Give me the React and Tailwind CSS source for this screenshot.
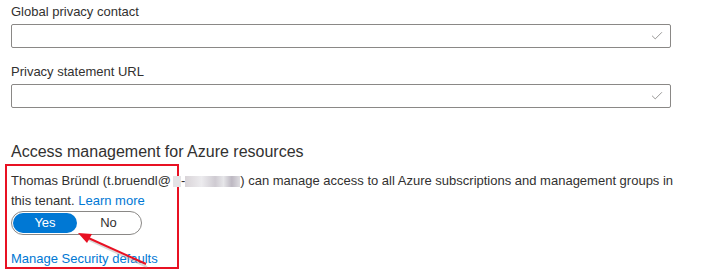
import { Check } from 'lucide-react'

const font = { fontFamily: '"Segoe UI", "Liberation Sans", Arial, sans-serif' }

function Field({ label }) {
  return (
    <div>
      <label className="block pt-[2px] text-[13px] leading-[20px] text-[#323130] mb-[2px]">{label}</label>
      <div className="h-[24px] w-[660px] border border-[#8a8886] rounded-[2px] flex items-center justify-end pr-[6px]">
        <Check size={14} strokeWidth={1.1} className="text-[#605e5c]" />
      </div>
    </div>
  )
}

export default function App() {
  return (
    <div className="relative w-[708px] h-[271px] bg-white overflow-hidden pl-[11px]" style={font}>
      <div className="flex flex-col gap-[12px]">
        <Field label="Global privacy contact" />
        <Field label="Privacy statement URL" />
      </div>

      <h2 className="mt-[33px] text-[16px] leading-[22px] text-[#323130]">Access management for Azure resources</h2>

      <div className="-ml-[6px] mt-[1px] w-[174px] h-[105px] border-2 border-[#e81123] pl-[4px] pt-[5px]">
        <p className="w-[680px] text-[13px] leading-[20px] text-[#323130]">
          <span className="whitespace-nowrap">
            Thomas Bründl (t.bruendl@
            <span className="inline-block align-middle ml-[2px] w-[8px] h-[11px] bg-[#e3e3e6]" />
            -
            <span className="inline-block align-middle w-[55px] h-[11px] bg-[linear-gradient(90deg,#d9d4d8,#ecebee_30%,#cfcbd2_55%,#e6e6e9_70%,#bdb8c2_85%,#dedde1)]" />
            ) can manage access to all Azure subscriptions and management groups in
          </span>
          <br />
          this tenant. <span className="text-[#0078d4]">Learn more</span>
        </p>
        <div className="w-[131px] h-[24px] rounded-full border border-[#8a8886] flex items-center p-[1px]">
          <div className="w-[64px] h-[20px] rounded-full bg-[#0078d4] text-white text-[13px] flex items-center justify-center">Yes</div>
          <div className="flex-1 text-[13px] text-[#323130] text-center">No</div>
        </div>
        <p className="mt-[14px] whitespace-nowrap text-[13px] leading-[20px] text-[#0078d4]">Manage Security defaults</p>
      </div>

      <svg className="absolute left-0 top-0 pointer-events-none" width="708" height="271">
        <line x1="146" y1="265" x2="84" y2="236" stroke="#a0a0a0" strokeWidth="2" opacity="0.4" transform="translate(1,2)" />
        <line x1="146" y1="264" x2="84" y2="236" stroke="#e81123" strokeWidth="2" />
        <polygon points="78,233 92,234 87,243" fill="#e81123" />
      </svg>
    </div>
  )
}
